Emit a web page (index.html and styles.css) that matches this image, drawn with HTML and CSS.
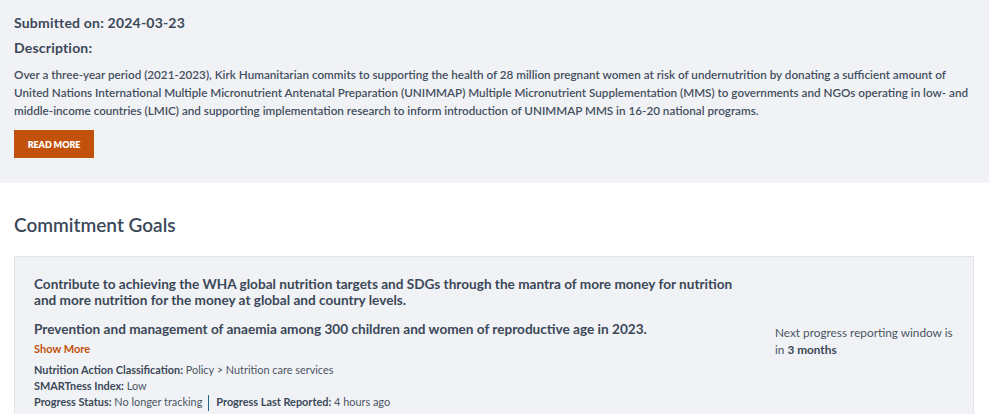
FILE: index.html
```html
<!DOCTYPE html>
<html>
<head>
<meta charset="utf-8">
<link rel="stylesheet" href="styles.css">
</head>
<body>
<section class="summary">
  <h3 class="submitted">Submitted on: 2024-03-23</h3>
  <h3 class="desc-label">Description:</h3>
  <p class="desc">Over a three-year period (2021-2023), Kirk Humanitarian commits to supporting the health of 28 million pregnant women at risk of undernutrition by donating a sufficient amount of United Nations International Multiple Micronutrient Antenatal Preparation (UNIMMAP) Multiple Micronutrient Supplementation (MMS) to governments and NGOs operating in low- and middle-income countries (LMIC) and supporting implementation research to inform introduction of UNIMMAP MMS in 16-20 national programs.</p>
  <button class="read-more">READ MORE</button>
</section>
<section class="goals">
  <h2 class="goals-title">Commitment Goals</h2>
  <div class="card">
    <div class="card-main">
      <p class="goal-overall">Contribute to achieving the WHA global nutrition targets and SDGs through the mantra of more money for nutrition and more nutrition for the money at global and country levels.</p>
      <p class="goal">Prevention and management of anaemia among 300 children and women of reproductive age in 2023.</p>
      <a class="show-more">Show More</a>
      <ul class="meta">
        <li><b>Nutrition Action Classification:</b> Policy &gt; Nutrition care services</li>
        <li><b>SMARTness Index:</b> Low</li>
        <li><b>Progress Status:</b> No longer tracking<span class="sep"></span><b>Progress Last Reported:</b> 4 hours ago</li>
      </ul>
    </div>
    <div class="card-side">
      <p class="next">Next progress reporting window is in <b>3 months</b></p>
    </div>
  </div>
</section>
</body>
</html>
```
FILE: styles.css
```css
html, body {
  margin: 0;
  padding: 0;
  background: #ffffff;
  font-family: Lato, "Liberation Sans", sans-serif;
  color: #3b4858;
}
.summary {
  background: #f1f2f6;
  padding: 13px 10px 25px 14px;
}
.submitted, .desc-label {
  margin: 0;
  font-size: 14px;
  font-weight: 700;
  line-height: 20px;
  letter-spacing: 0.2px;
}
.desc-label {
  margin-top: 5px;
}
.desc {
  margin: 7px 0 0;
  font-size: 11.7px;
  line-height: 18px;
  font-weight: 600;
  color: #434f5e;
}
.read-more {
  margin-top: 11px;
  width: 80px;
  height: 28px;
  border: 0;
  background: #c2510b;
  color: #fff;
  font-family: Lato, "Liberation Sans", sans-serif;
  font-weight: 800;
  font-size: 9px;
  letter-spacing: -0.1px;
  padding: 0;
  display: block;
}
.goals {
  padding: 30px 15px 0 14px;
}
.goals-title {
  margin: 0;
  font-size: 19px;
  line-height: 24px;
  font-weight: 600;
  color: #3b4858;
}
.card {
  margin-top: 19px;
  background: #f1f2f6;
  border: 1px solid #e2e4e8;
  display: flex;
  padding: 19px 19px 20px;
  min-height: 150px;
}
.card-main {
  flex: 0 0 702px;
}
.goal-overall, .goal {
  margin: 0;
  font-size: 13.6px;
  line-height: 16px;
  font-weight: 700;
  color: #3b4858;
}
.goal {
  margin-top: 13px;
}
.show-more {
  display: block;
  margin-top: 4px;
  color: #c2510b;
  font-size: 11px;
  font-weight: 700;
  line-height: 16px;
}
.meta {
  list-style: none;
  margin: 5px 0 0;
  padding: 0;
  font-size: 10.9px;
  line-height: 16px;
  color: #4a5563;
}
.meta b {
  font-weight: 700;
  color: #3b4858;
}
.sep {
  display: inline-block;
  width: 1px;
  height: 16px;
  background: #1d6b8a;
  margin: 0 7px 0 6px;
  vertical-align: middle;
}
.card-side {
  margin-left: 39px;
  padding-top: 48px;
  width: 192px;
}
.next {
  margin: 0;
  font-size: 11.8px;
  line-height: 17px;
  color: #4a5563;
}
.next b {
  font-weight: 700;
  color: #3b4858;
}
```
